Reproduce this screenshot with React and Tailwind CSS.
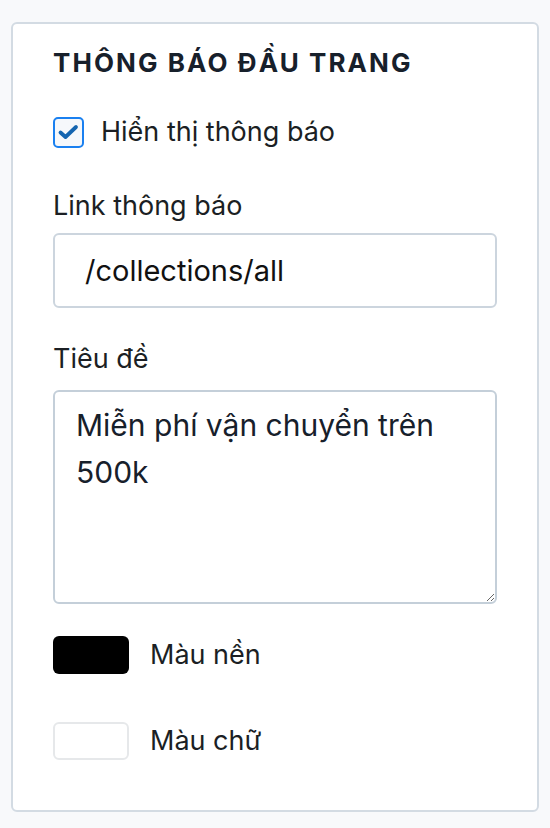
import React, { useState } from 'react';

const font = { fontFamily: 'Inter, "Noto Sans", sans-serif' };

const ColorRow = ({ color, label, bordered }) => (
    <div className="flex items-center gap-[21px] h-[38px]">
        <div className={`w-[76px] h-[38px] rounded-[6px] ${bordered ? 'border-2 border-[#e6e8ea]' : ''}`} style={{ backgroundColor: color }}></div>
        <span className="text-[27px] text-[#1b1f24]">{label}</span>
    </div>
);

const App = () => {
    const [show, setShow] = useState(true);

    return (
        <div className="min-h-screen bg-[#f8f9fb] pt-[22px] px-[11px] pb-[16px]" style={font}>
            <div className="bg-white border-2 border-[#d3dbe3] rounded-[6px] px-[40px] pt-[22px] pb-[50px]">
                <h2 className="text-[26px] leading-[34px] font-bold tracking-[0.08em] text-[#17202b]">THÔNG BÁO ĐẦU TRANG</h2>

                <label className="flex items-center gap-[17px] mt-[36px] h-[33px] cursor-pointer">
                    <span onClick={() => setShow(!show)}
                          className="w-[31px] h-[31px] rounded-[5px] border-2 border-[#1a80f0] bg-[#f6f8fb] flex items-center justify-center">
                        {show && (
                            <svg width="27" height="27" viewBox="0 0 27 27">
                                <path d="M5.5 13.5 L10.5 18 L21 8" fill="none" stroke="#1565b0" strokeWidth="3.8" strokeLinecap="round" strokeLinejoin="round" />
                            </svg>
                        )}
                    </span>
                    <span className="text-[27px] text-[#1b1f24]">Hiển thị thông báo</span>
                </label>

                <div className="mt-[41px]">
                    <div className="text-[27px] leading-[32px] text-[#1b1f24]">Link thông báo</div>
                    <input type="text" defaultValue="/collections/all"
                           className="mt-[11px] w-full h-[75px] px-[30px] rounded-[6px] border-2 border-[#ccd5de] outline-none text-[29px] text-[#111]" style={font} />
                </div>

                <div className="mt-[35px]">
                    <div className="text-[27px] leading-[32px] text-[#1b1f24]">Tiêu đề</div>
                    <textarea defaultValue="Miễn phí vận chuyển trên 500k"
                              className="mt-[15px] block w-full h-[214px] px-[21px] py-[10px] rounded-[6px] border-2 border-[#c4cfd9] outline-none text-[30px] leading-[47px] text-[#17202b]" style={font}></textarea>
                </div>

                <div className="mt-[32px] flex flex-col gap-[48px]">
                    <ColorRow color="#000000" label="Màu nền" />
                    <ColorRow color="#ffffff" label="Màu chữ" bordered />
                </div>
            </div>
        </div>
    );
};

export default App;
